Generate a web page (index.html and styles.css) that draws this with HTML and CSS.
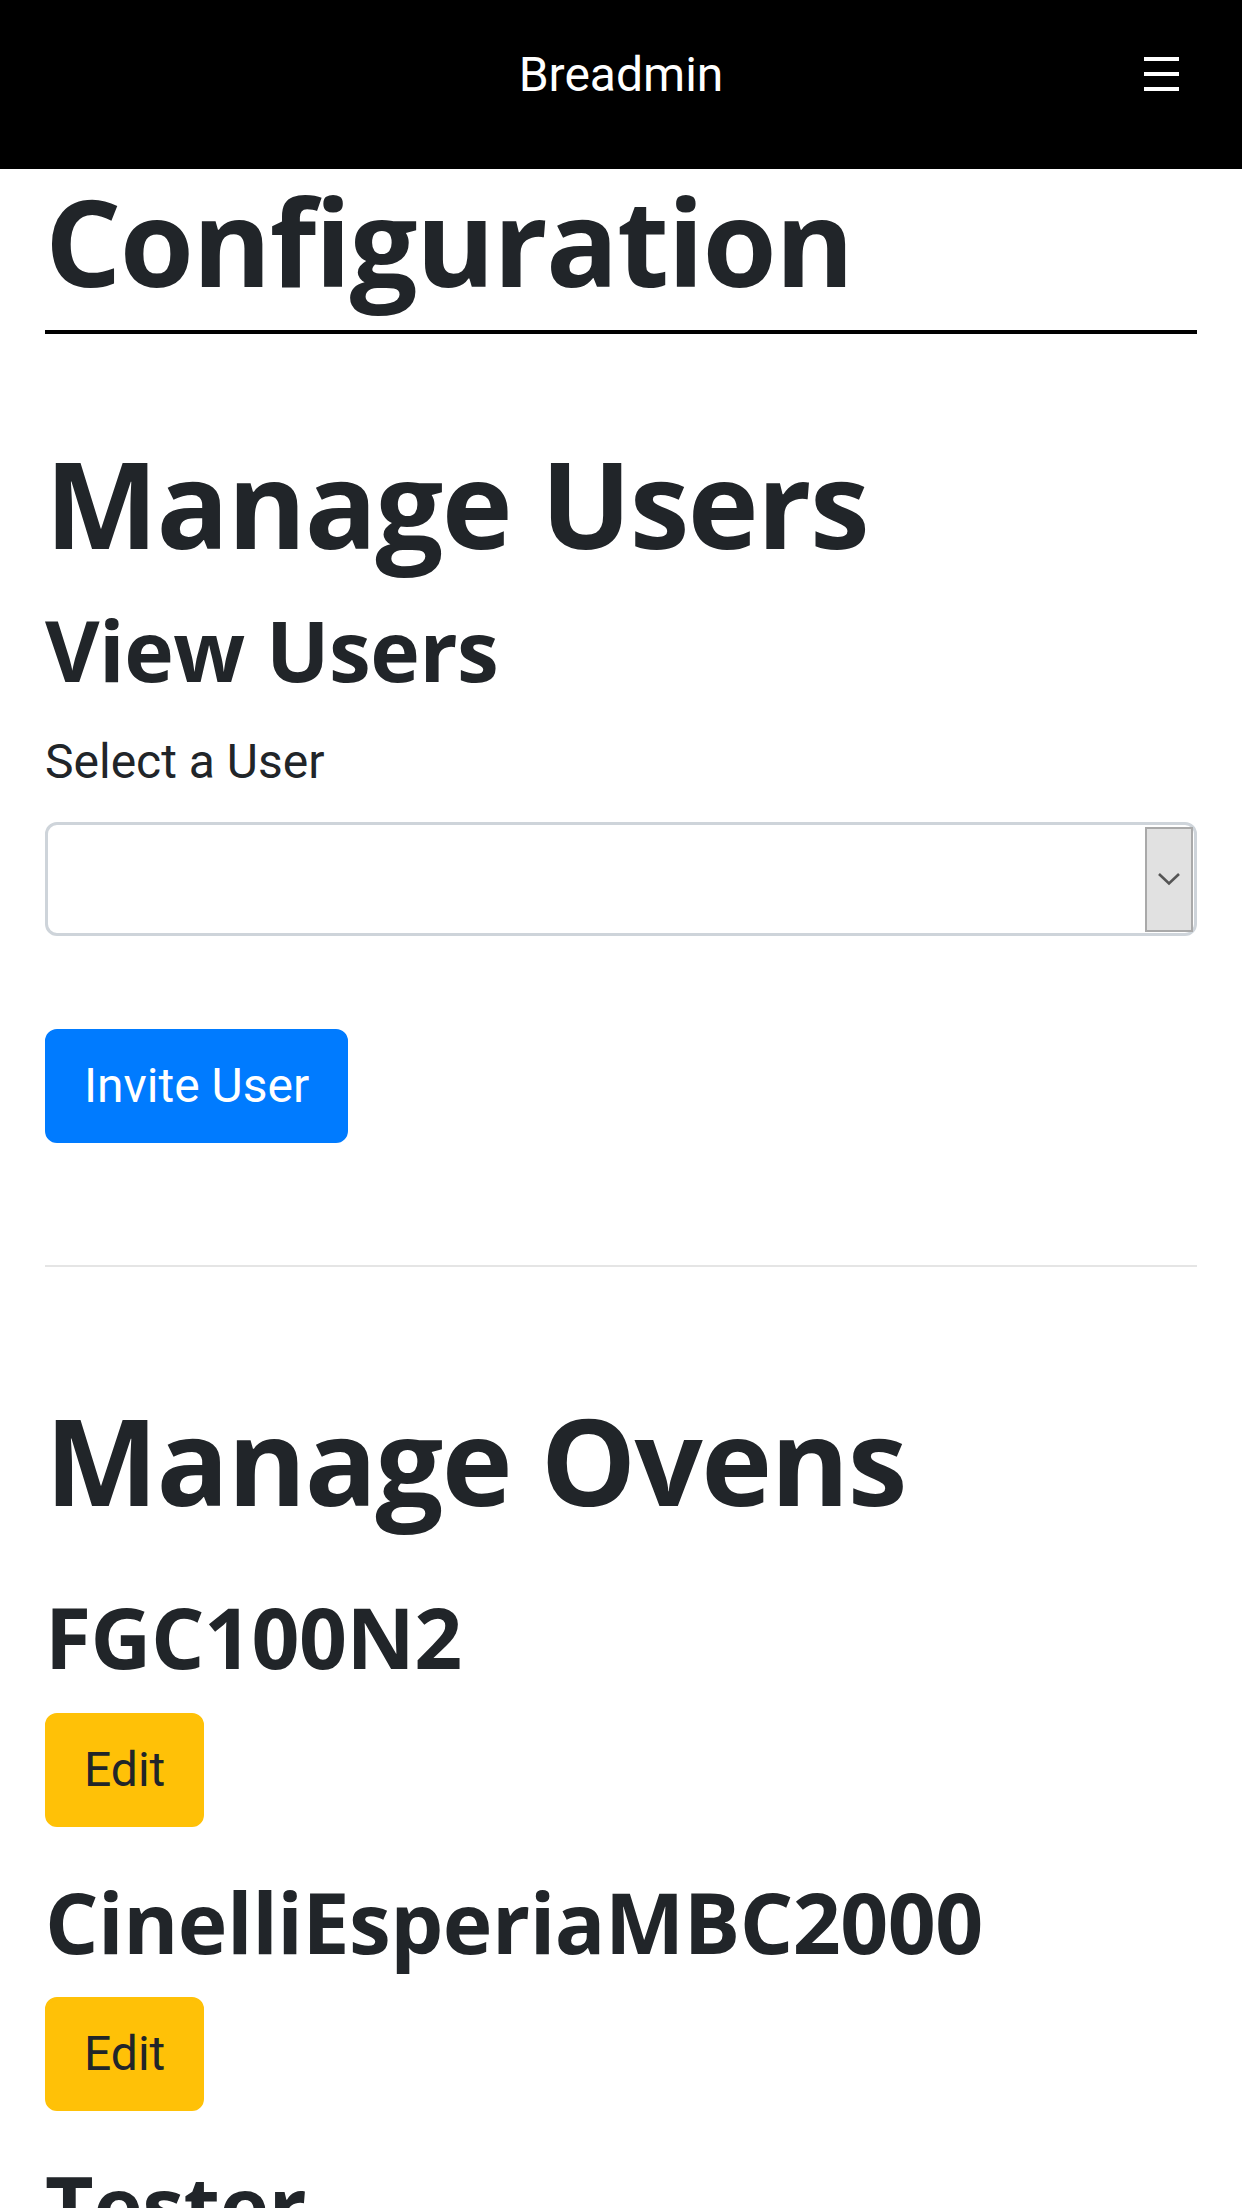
FILE: index.html
```html
<!DOCTYPE html>
<html lang="en">
<head>
<meta charset="utf-8">
<title>Breadmin - Configuration</title>
<link rel="stylesheet" href="styles.css">
</head>
<body>
<nav class="navbar">
  <span class="nav-spacer"></span>
  <a class="brand">Breadmin</a>
  <button class="toggler" aria-label="Menu">
    <svg class="toggler-icon" width="35" height="34" viewBox="0 0 35 34">
      <rect x="0" y="0" width="35" height="4" fill="#fff"/>
      <rect x="0" y="15" width="35" height="4" fill="#fff"/>
      <rect x="0" y="30" width="35" height="4" fill="#fff"/>
    </svg>
  </button>
</nav>
<main class="container">
  <h1 class="page-title">Configuration</h1>
  <section class="users">
    <h1 class="section-title">Manage Users</h1>
    <h3 class="sub-title">View Users</h3>
    <div class="form-group">
      <label class="form-label">Select a User</label>
      <div class="select">
        <span class="select-value"></span>
        <span class="select-arrow">
          <svg width="24" height="14" viewBox="0 0 24 14"><polyline points="2,2 12,11.5 22,2" fill="none" stroke="#555" stroke-width="2.6"/></svg>
        </span>
      </div>
    </div>
    <button class="btn btn-primary">Invite User</button>
  </section>
  <hr class="divider">
  <section class="ovens">
    <h1 class="section-title">Manage Ovens</h1>
    <div class="oven">
      <h3 class="sub-title">FGC100N2</h3>
      <button class="btn btn-warning">Edit</button>
    </div>
    <div class="oven">
      <h3 class="sub-title">CinelliEsperiaMBC2000</h3>
      <button class="btn btn-warning">Edit</button>
    </div>
    <div class="oven">
      <h3 class="sub-title">Tester</h3>
      <button class="btn btn-warning">Edit</button>
    </div>
  </section>
</main>
</body>
</html>
```
FILE: styles.css
```css
* { box-sizing: border-box; }
html, body { margin: 0; padding: 0; }
body {
  font-family: Roboto, "Liberation Sans", sans-serif;
  font-size: 48px;
  line-height: 1.5;
  color: #212529;
  background: #fff;
  overflow: hidden;
}
.navbar {
  height: 169px;
  background: #000;
  display: grid;
  grid-template-columns: 1fr auto 1fr;
  align-items: start;
  padding-top: 39px;
}
.brand {
  color: #fff;
  font-size: 48px;
  line-height: 72px;
  text-decoration: none;
}
.toggler {
  justify-self: end;
  margin: 18px 63px 0 0;
  padding: 0;
  border: 0;
  background: transparent;
  line-height: 0;
}
.container { padding: 0 45px; }
.page-title, .section-title, .sub-title {
  font-family: "Open Sans", "Noto Sans", sans-serif;
  font-weight: 700;
  line-height: 1.2;
  color: #212529;
}
.page-title, .section-title { font-size: 120px; letter-spacing: -1.6px; }
.sub-title { font-size: 84px; margin: 0 0 25px; letter-spacing: -0.5px; }
.page-title {
  margin: 0;
  padding-bottom: 17px;
  border-bottom: 4px solid #000;
}
.users .section-title { margin: 97px 0 25px; }
.form-label { display: block; line-height: 72px; margin: 0 0 24px; }
.form-group { margin-bottom: 93px; }
.select {
  height: 114px;
  border: 3px solid #ced4da;
  border-radius: 12px;
  background: #fff;
  display: flex;
  padding: 2px 1px 1px 0;
}
.select-value { flex: 1; }
.select-arrow {
  width: 48px;
  background: #e1e1e1;
  border: 2px solid #a9a9a9;
  display: flex;
  align-items: center;
  justify-content: center;
}
.btn {
  display: inline-block;
  font-family: Roboto, "Liberation Sans", sans-serif;
  font-size: 48px;
  line-height: 72px;
  padding: 18px 36px;
  border: 3px solid transparent;
  border-radius: 12px;
  cursor: pointer;
}
.btn-primary { background: #007bff; border-color: #007bff; color: #fff; }
.btn-warning { background: #ffc107; border-color: #ffc107; color: #212529; }
.divider {
  margin: 122px 0 121px;
  border: 0;
  border-top: 2px solid #e5e5e5;
  height: 0;
}
.ovens .section-title { margin: 0 0 55px; }
.oven + .oven { margin-top: 45px; }
.oven .btn { display: block; }
```
